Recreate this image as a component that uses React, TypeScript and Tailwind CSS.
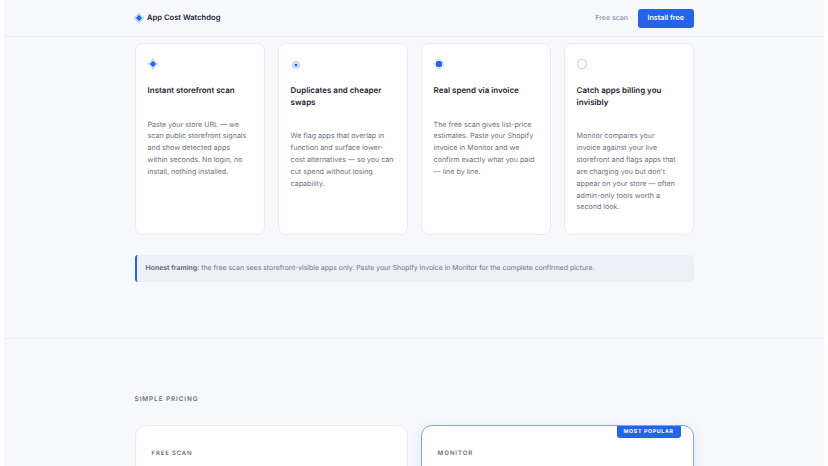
function Icon({ kind }: { kind: number }) {
  if (kind === 0)
    return (
      <svg width="12" height="12" viewBox="0 0 12 12">
        <path d="M6 1.2 L10.8 6 L6 10.8 L1.2 6 Z" fill="none" stroke="#2563eb" strokeOpacity="0.4" strokeWidth="1" />
        <path d="M6 2.8 L9.2 6 L6 9.2 L2.8 6 Z" fill="#2563eb" />
      </svg>
    );
  if (kind === 1)
    return (
      <svg width="12" height="12" viewBox="0 0 12 12" className="translate-y-[1px]">
        <circle cx="6" cy="6" r="3.3" fill="none" stroke="#2563eb" strokeOpacity="0.5" strokeWidth="0.9" />
        <circle cx="6" cy="6" r="1.6" fill="#2563eb" />
      </svg>
    );
  if (kind === 2)
    return (
      <svg width="12" height="12" viewBox="0 0 12 12">
        <circle cx="6" cy="6" r="4.7" fill="none" stroke="#2563eb" strokeOpacity="0.35" strokeWidth="0.9" strokeDasharray="1 0.6" />
        <circle cx="6" cy="6" r="3.3" fill="#2563eb" />
      </svg>
    );
  return (
    <svg width="12" height="12" viewBox="0 0 12 12">
      <circle cx="6" cy="6" r="4.6" fill="none" stroke="#2563eb" strokeOpacity="0.4" strokeWidth="1.1" strokeDasharray="1.2 0.7" />
    </svg>
  );
}

const cards = [
  { t: "Instant storefront scan", b: "Paste your store URL — we scan public storefront signals and show detected apps within seconds. No login, no install, nothing installed." },
  { t: "Duplicates and cheaper swaps", b: "We flag apps that overlap in function and surface lower-cost alternatives — so you can cut spend without losing capability." },
  { t: "Real spend via invoice", b: "The free scan gives list-price estimates. Paste your Shopify invoice in Monitor and we confirm exactly what you paid — line by line." },
  { t: "Catch apps billing you invisibly", b: "Monitor compares your invoice against your live storefront and flags apps that are charging you but don't appear on your store — often admin-only tools worth a second look." },
];

export default function App() {
  return (
    <div className="h-[466px] overflow-hidden bg-white px-1 font-['Inter',sans-serif] antialiased [text-rendering:geometricPrecision]">
      <div className="h-full bg-[#f7f8fc]">
        <header className="flex h-[37px] items-center justify-between border-b border-[#e8ebf3] pl-[131px] pr-[130.5px]">
          <div className="flex items-center gap-[2px]">
            <div className="-ml-[2px]"><Icon kind={0} /></div>
            <span className="text-[7.6px] font-semibold text-[#1f2433]">App Cost Watchdog</span>
          </div>
          <div className="flex items-center gap-[10px]">
            <span className="text-[7px] font-medium text-[#858b9c]">Free scan</span>
            <span className="flex h-[19px] w-[55.5px] items-center justify-center rounded-[3px] bg-[#2563eb] text-[7.2px] font-semibold text-white">Install free</span>
          </div>
        </header>

        <section className="h-[302px] border-b border-[#e8ebf3] pl-[130.6px] pr-[130.4px] pt-[6px]">
          <div className="grid grid-cols-4 gap-[13px]">
            {cards.map((c, i) => (
              <div key={c.t} className="h-[192px] rounded-[8px] border border-[#e8ebf3] bg-white pl-[12px] pr-[13px] pt-[12px]">
                <div className="-ml-[1px] flex h-[16px] items-center"><Icon kind={i} /></div>
                <h3 className="mt-[13px] text-[7.95px] font-semibold leading-[11.5px] text-[#1f2433]">{c.t}</h3>
                <p className="mt-[22px] text-[7.1px] leading-[11.9px] text-[#6b7280]">{c.b}</p>
              </div>
            ))}
          </div>
          <div className="mt-[20px] flex h-[27px] items-center rounded-[3px] border-l-2 border-[#2563eb] bg-[#eef0f8] pl-[9px] text-[6.9px] text-[#6b7280]">
            <span><strong className="font-semibold text-[#5b6172]">Honest framing:</strong> the free scan sees storefront-visible apps only. Paste your Shopify invoice in Monitor for the complete confirmed picture.</span>
          </div>
        </section>

        <section className="pl-[130.6px] pr-[130.4px] pt-[56px]">
          <div className="text-[6.4px] font-semibold leading-[9px] tracking-[0.14em] text-[#6b7280]">SIMPLE PRICING</div>
          <div className="mt-[21px] grid grid-cols-2 gap-[13px]">
            <div className="h-[120px] rounded-[11px] border border-[#e8ebf3] bg-white px-[16px] pt-[23px]">
              <div className="text-[6px] font-semibold leading-[9px] tracking-[0.14em] text-[#6b7280]">FREE SCAN</div>
            </div>
            <div className="relative h-[120px] rounded-[11px] border border-[#7fa2f5] bg-white px-[16px] pt-[23px] shadow-[0_3px_14px_rgba(37,99,235,0.10)]">
              <div className="text-[6.2px] font-semibold leading-[9px] tracking-[0.14em] text-[#6b7280]">MONITOR</div>
              <div className="absolute right-[12px] top-0 flex h-[12px] w-[64px] items-center justify-center rounded-b-[3px] bg-[#2563eb] pt-[1px] text-[5.3px] font-bold tracking-[0.12em] text-white">MOST POPULAR</div>
            </div>
          </div>
        </section>
      </div>
    </div>
  );
}
